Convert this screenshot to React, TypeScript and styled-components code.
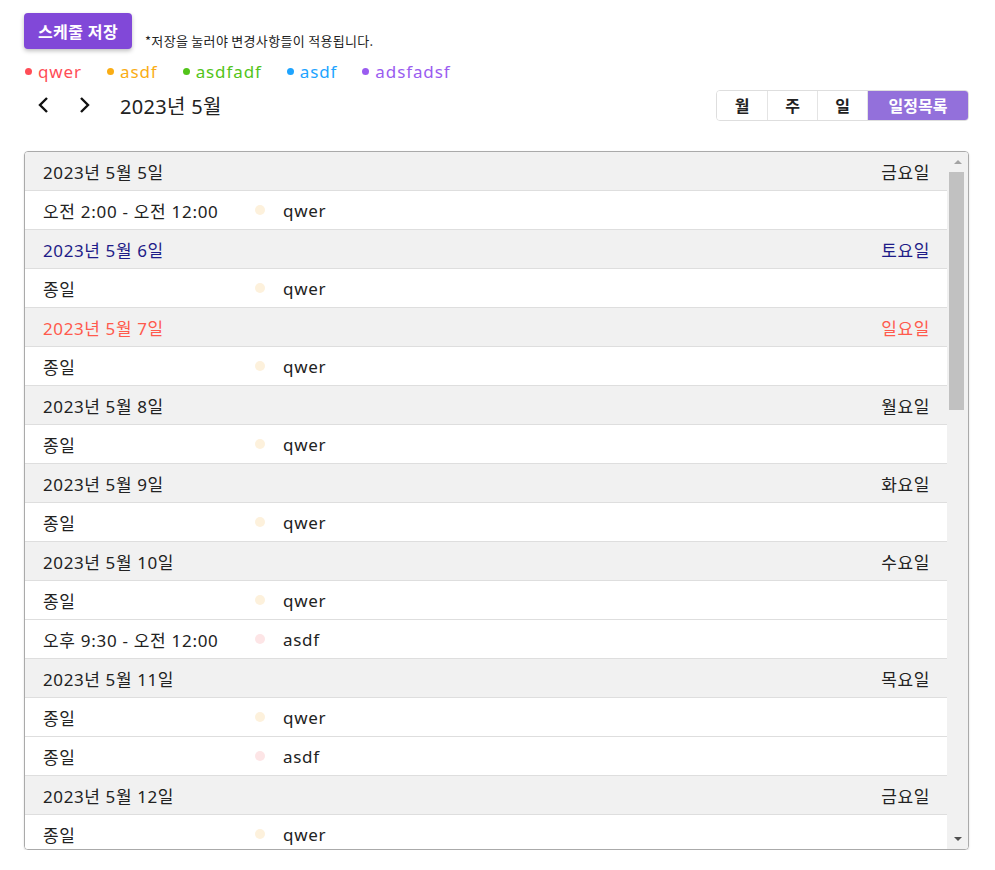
import * as React from "react";
import styled, { createGlobalStyle } from "styled-components";

const GlobalStyle = createGlobalStyle`
  body {
    margin: 0;
    background: #fff;
    font-family: "Noto Sans", "Noto Sans CJK KR", sans-serif;
    color: #222;
  }
`;

const Page = styled.div`
  padding: 13px 26px 0 24px;
  display: flex;
  flex-direction: column;
`;

const TopRow = styled.div`
  display: flex;
  align-items: flex-end;
  gap: 13px;
`;

const SaveButton = styled.button`
  height: 36px;
  width: 108px;
  border: none;
  border-radius: 4px;
  background: #8148d8;
  color: #fff;
  font-family: "Noto Sans CJK KR", sans-serif;
  font-weight: 700;
  font-size: 16px;
  letter-spacing: 0.5px;
  box-shadow: 0 2px 4px rgba(0, 0, 0, 0.25);
  cursor: pointer;
`;

const Note = styled.span`
  font-family: "Noto Sans CJK KR", sans-serif;
  font-size: 13px;
  line-height: 15px;
  color: #222;
  padding-bottom: 1px;
  letter-spacing: 0.3px;
`;

const Legend = styled.div`
  display: flex;
  align-items: center;
  gap: 24px;
  margin-top: 10px;
  height: 24px;
`;

const LegendItem = styled.span<{ $color: string }>`
  display: flex;
  align-items: center;
  gap: 6px;
  color: ${(p) => p.$color};
  font-size: 17px;
  letter-spacing: 0.9px;
  &::before {
    content: "";
    width: 7px;
    height: 7px;
    border-radius: 50%;
    background: ${(p) => p.$color};
    margin-left: 1px;
  }
`;

const NavRow = styled.div`
  display: flex;
  align-items: center;
  justify-content: space-between;
  margin-top: 6px;
  height: 32px;
`;

const NavLeft = styled.div`
  display: flex;
  align-items: center;
`;

const Arrow = styled.button`
  background: none;
  border: none;
  width: 40px;
  height: 30px;
  display: flex;
  align-items: center;
  justify-content: center;
  padding: 0;
  cursor: pointer;
`;

const MonthTitle = styled.h2`
  margin: 0 0 0 16px;
  font-weight: 400;
  font-size: 20px;
  letter-spacing: 0.3px;
  color: #222;
`;

const Segmented = styled.div`
  display: flex;
  border: 1px solid #dedede;
  border-radius: 4px;
  overflow: hidden;
`;

const SegButton = styled.button<{ $active?: boolean; $wide?: boolean }>`
  width: ${(p) => (p.$wide ? "101px" : "50px")};
  height: 29px;
  border: none;
  border-left: 1px solid #e4e4e4;
  &:first-child {
    border-left: none;
  }
  background: ${(p) => (p.$active ? "#9370db" : "#fff")};
  color: ${(p) => (p.$active ? "#fff" : "#222")};
  font-family: "Noto Sans CJK KR", sans-serif;
  font-weight: 700;
  font-size: 16px;
  padding: 0;
`;

const ListBox = styled.div`
  margin-top: 30px;
  height: 697px;
  border: 1px solid #aaa;
  border-radius: 4px;
  overflow: hidden;
  display: flex;
  box-shadow: 0 1px 2px rgba(0, 0, 0, 0.15);
`;

const ListBody = styled.div`
  flex: 1;
  overflow: hidden;
`;

const ScrollTrack = styled.div`
  width: 21px;
  background: #f1f1f1;
  display: flex;
  flex-direction: column;
  align-items: center;
`;

const ScrollArrow = styled.div<{ $down?: boolean }>`
  height: 20px;
  width: 100%;
  display: flex;
  align-items: center;
  justify-content: center;
  &::after {
    content: "";
    border-left: 4px solid transparent;
    border-right: 4px solid transparent;
    ${(p) => (p.$down ? "border-top: 4px solid #505050;" : "border-bottom: 4px solid #a3a3a3;")}
  }
`;

const ScrollThumb = styled.div`
  width: 15px;
  height: 238px;
  background: #c1c1c1;
  margin-right: 2px;
`;

const ScrollSpacer = styled.div`
  flex: 1;
`;

const HeaderRow = styled.div<{ $color: string }>`
  display: flex;
  justify-content: space-between;
  align-items: center;
  height: 38px;
  padding: 0 17px 0 18px;
  background: #f1f1f1;
  border-bottom: 1px solid #dedede;
  color: ${(p) => p.$color};
  font-size: 17px;
  letter-spacing: 0.6px;
`;

const EventRow = styled.div`
  display: grid;
  grid-template-columns: 212px 28px 1fr;
  align-items: center;
  height: 38px;
  padding-left: 18px;
  border-bottom: 1px solid #dedede;
  font-size: 17px;
  letter-spacing: 0.7px;
  background: #fff;
`;

const Dot = styled.span<{ $color: string }>`
  width: 10px;
  height: 10px;
  border-radius: 50%;
  background: ${(p) => p.$color};
`;

const Chevron = ({ dir }: { dir: "left" | "right" }) => (
  <svg width="14" height="20" viewBox="0 0 14 20">
    <path
      d={dir === "left" ? "M10 3 L3 10 L10 17" : "M4 3 L11 10 L4 17"}
      fill="none"
      stroke="#111"
      strokeWidth="2.4"
    />
  </svg>
);

type Ev = { time: string; title: string; color: string };
type Day = { date: string; weekday: string; events: Ev[] };

const QWER = "#fdf1dc";
const ASDF = "#fde5e6";

const dayColor = (w: string) => (w === "토요일" ? "#1e1c88" : w === "일요일" ? "#ff5a4d" : "#222");

const days: Day[] = [
  { date: "2023년 5월 5일", weekday: "금요일", events: [{ time: "오전 2:00 - 오전 12:00", title: "qwer", color: QWER }] },
  { date: "2023년 5월 6일", weekday: "토요일", events: [{ time: "종일", title: "qwer", color: QWER }] },
  { date: "2023년 5월 7일", weekday: "일요일", events: [{ time: "종일", title: "qwer", color: QWER }] },
  { date: "2023년 5월 8일", weekday: "월요일", events: [{ time: "종일", title: "qwer", color: QWER }] },
  { date: "2023년 5월 9일", weekday: "화요일", events: [{ time: "종일", title: "qwer", color: QWER }] },
  {
    date: "2023년 5월 10일",
    weekday: "수요일",
    events: [
      { time: "종일", title: "qwer", color: QWER },
      { time: "오후 9:30 - 오전 12:00", title: "asdf", color: ASDF },
    ],
  },
  {
    date: "2023년 5월 11일",
    weekday: "목요일",
    events: [
      { time: "종일", title: "qwer", color: QWER },
      { time: "종일", title: "asdf", color: ASDF },
    ],
  },
  { date: "2023년 5월 12일", weekday: "금요일", events: [{ time: "종일", title: "qwer", color: QWER }] },
];

const legend = [
  { name: "qwer", color: "#ff4d57" },
  { name: "asdf", color: "#faad14" },
  { name: "asdfadf", color: "#52c41a" },
  { name: "asdf", color: "#1ea4ff" },
  { name: "adsfadsf", color: "#9a5cf0" },
];

export default function App() {
  return (
    <>
      <GlobalStyle />
      <Page>
        <TopRow>
          <SaveButton>스케줄 저장</SaveButton>
          <Note>*저장을 눌러야 변경사항들이 적용됩니다.</Note>
        </TopRow>
        <Legend>
          {legend.map((l, i) => (
            <LegendItem key={i} $color={l.color}>
              {l.name}
            </LegendItem>
          ))}
        </Legend>
        <NavRow>
          <NavLeft>
            <Arrow>
              <Chevron dir="left" />
            </Arrow>
            <Arrow>
              <Chevron dir="right" />
            </Arrow>
            <MonthTitle>2023년 5월</MonthTitle>
          </NavLeft>
          <Segmented>
            <SegButton>월</SegButton>
            <SegButton>주</SegButton>
            <SegButton>일</SegButton>
            <SegButton $active $wide>
              일정목록
            </SegButton>
          </Segmented>
        </NavRow>
        <ListBox>
          <ListBody>
            {days.map((d) => (
              <React.Fragment key={d.date}>
                <HeaderRow $color={dayColor(d.weekday)}>
                  <span>{d.date}</span>
                  <span>{d.weekday}</span>
                </HeaderRow>
                {d.events.map((e, i) => (
                  <EventRow key={i}>
                    <span>{e.time}</span>
                    <Dot $color={e.color} />
                    <span>{e.title}</span>
                  </EventRow>
                ))}
              </React.Fragment>
            ))}
          </ListBody>
          <ScrollTrack>
            <ScrollArrow />
            <ScrollThumb />
            <ScrollSpacer />
            <ScrollArrow $down />
          </ScrollTrack>
        </ListBox>
      </Page>
    </>
  );
}
